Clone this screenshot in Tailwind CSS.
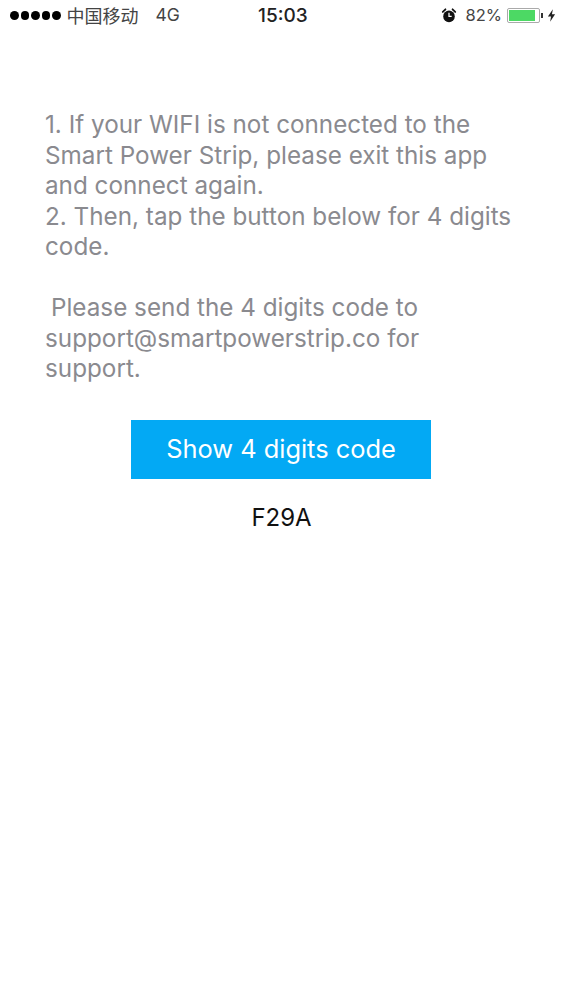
<!DOCTYPE html>
<html lang="en">
<head>
  <meta charset="UTF-8" />
  <title>Support</title>
  <script src="https://cdn.jsdelivr.net/npm/@tailwindcss/browser@4"></script>
</head>
<body class="bg-white font-['Inter','Liberation_Sans',sans-serif] w-[563px] h-[1000px] overflow-hidden">

  <!-- Status bar -->
  <header class="h-[31px] flex items-center justify-between pl-[10px] pr-[7px] text-[#333] relative">
    <div class="flex items-center">
      <div class="flex gap-[2px]">
        <span class="w-[8.5px] h-[8.5px] rounded-full bg-black"></span>
        <span class="w-[8.5px] h-[8.5px] rounded-full bg-black"></span>
        <span class="w-[8.5px] h-[8.5px] rounded-full bg-black"></span>
        <span class="w-[8.5px] h-[8.5px] rounded-full bg-black"></span>
        <span class="w-[8.5px] h-[8.5px] rounded-full bg-black"></span>
      </div>
      <span class="ml-[6px] text-[18px] font-['Noto_Sans_CJK_SC',sans-serif] text-[#444]">中国移动</span>
      <span class="ml-[17px] text-[17.5px] text-[#444]">4G</span>
    </div>
    <div class="absolute left-[258px] top-[2px] text-[19px] font-medium text-[#222]">15:03</div>
    <div class="flex items-center">
      <svg width="16" height="17" viewBox="0 0 18 18" class="mr-[9px]">
        <circle cx="9" cy="10" r="6.5" fill="#111"/>
        <path d="M2 5 L5 2 M16 5 L13 2" stroke="#111" stroke-width="2" stroke-linecap="round"/>
        <path d="M9 6 V10 H12" stroke="#fff" stroke-width="1.4" fill="none"/>
      </svg>
      <span class="text-[16.5px] text-[#444]">82%</span>
      <div class="ml-[5px] w-[33px] h-[15px] border border-[#aaa] rounded-[2px] p-[1px] flex">
        <div class="w-[26px] bg-[#4cd964]"></div>
      </div>
      <div class="w-[2px] h-[5px] bg-[#333] ml-[1px]"></div>
      <svg width="9" height="15" viewBox="0 0 10 14" class="ml-[4px]">
        <path d="M6.5 0 L1 8 H4.5 L3.5 14 L9 5.5 H5.5 Z" fill="#222"/>
      </svg>
    </div>
  </header>

  <main class="pt-[79px] flex flex-col">
    <p class="pl-[45px] pr-[40px] text-[24.25px] leading-[30.5px] text-[#8a8a8f]">
      1. If your WIFI is not connected to the<br>
      Smart Power Strip, please exit this app<br>
      and connect again.<br>
      2. Then, tap the button below for 4 digits<br>
      code.<br>
      <br>
      <span class="ml-[6px]">Please send the 4 digits code to</span><br>
      support@smartpowerstrip.co for<br>
      support.
    </p>
    <button class="mt-[35px] ml-[131px] w-[300px] h-[59px] pt-[1px] bg-[#03a9f4] text-white text-[25.4px] flex items-center justify-center">Show 4 digits code</button>
    <div class="mt-[24px] text-center text-[24px] leading-[30px] text-[#111]">F29A</div>
  </main>

</body>
</html>
